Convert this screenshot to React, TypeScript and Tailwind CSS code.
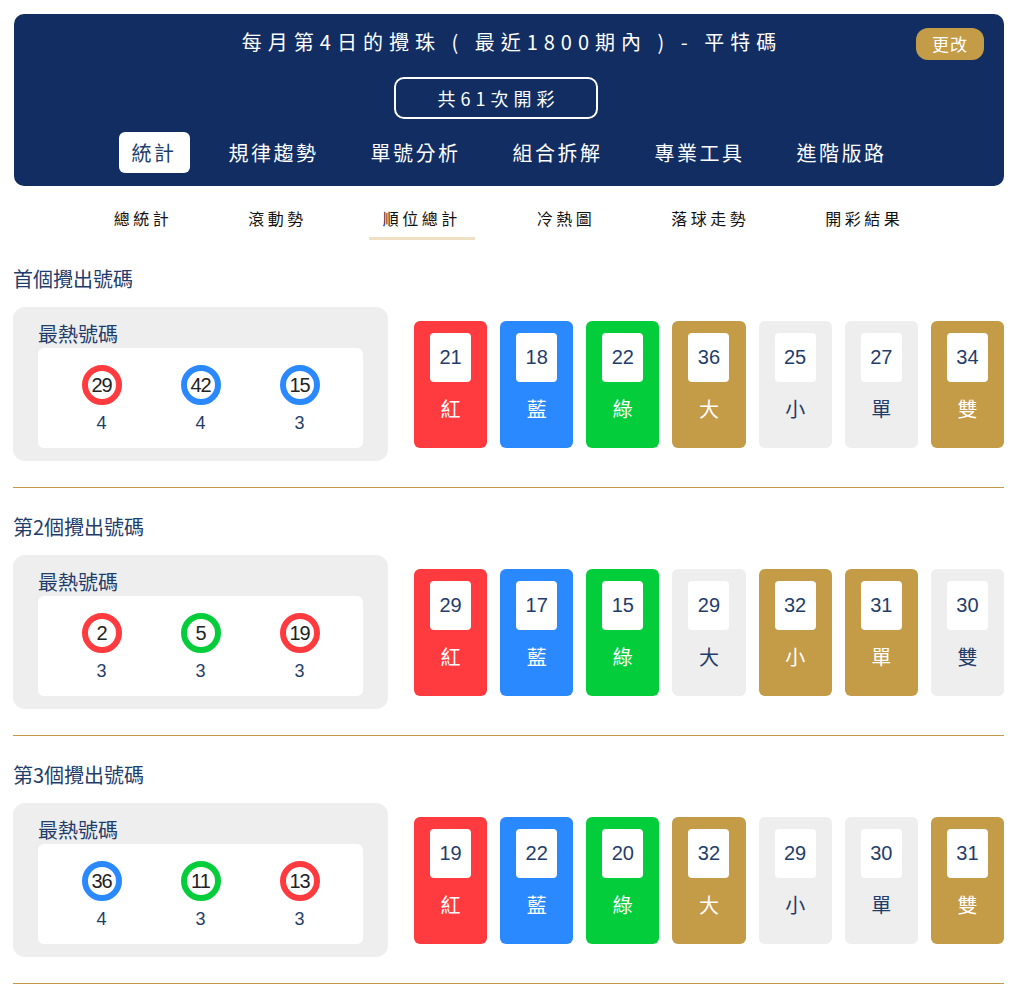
import React from 'react';

type Ball = { num: number; color: 'red' | 'blue' | 'green'; count: number };
type Card = { num: number; label: string; tone: 'red' | 'blue' | 'green' | 'gold' | 'gray' };
type Section = { title: string; balls: Ball[]; cards: Card[] };

const FONT = { fontFamily: '"Noto Sans CJK TC", "Noto Sans", sans-serif' };
const NUM_FONT = { fontFamily: '"Liberation Sans", Arial, "Noto Sans CJK TC", sans-serif' };

const BALL_BORDER: Record<Ball['color'], string> = {
  red: 'border-[#ff3b3f]',
  blue: 'border-[#2a89ff]',
  green: 'border-[#03cd3a]',
};

const CARD_BG: Record<Card['tone'], string> = {
  red: 'bg-[#ff3b3f] text-white',
  blue: 'bg-[#2a89ff] text-white',
  green: 'bg-[#03cd3a] text-white',
  gold: 'bg-[#c49b47] text-white',
  gray: 'bg-[#eeeeee] text-[#1f3d6b]',
};

const sections: Section[] = [
  {
    title: '首個攪出號碼',
    balls: [
      { num: 29, color: 'red', count: 4 },
      { num: 42, color: 'blue', count: 4 },
      { num: 15, color: 'blue', count: 3 },
    ],
    cards: [
      { num: 21, label: '紅', tone: 'red' },
      { num: 18, label: '藍', tone: 'blue' },
      { num: 22, label: '綠', tone: 'green' },
      { num: 36, label: '大', tone: 'gold' },
      { num: 25, label: '小', tone: 'gray' },
      { num: 27, label: '單', tone: 'gray' },
      { num: 34, label: '雙', tone: 'gold' },
    ],
  },
  {
    title: '第2個攪出號碼',
    balls: [
      { num: 2, color: 'red', count: 3 },
      { num: 5, color: 'green', count: 3 },
      { num: 19, color: 'red', count: 3 },
    ],
    cards: [
      { num: 29, label: '紅', tone: 'red' },
      { num: 17, label: '藍', tone: 'blue' },
      { num: 15, label: '綠', tone: 'green' },
      { num: 29, label: '大', tone: 'gray' },
      { num: 32, label: '小', tone: 'gold' },
      { num: 31, label: '單', tone: 'gold' },
      { num: 30, label: '雙', tone: 'gray' },
    ],
  },
  {
    title: '第3個攪出號碼',
    balls: [
      { num: 36, color: 'blue', count: 4 },
      { num: 11, color: 'green', count: 3 },
      { num: 13, color: 'red', count: 3 },
    ],
    cards: [
      { num: 19, label: '紅', tone: 'red' },
      { num: 22, label: '藍', tone: 'blue' },
      { num: 20, label: '綠', tone: 'green' },
      { num: 32, label: '大', tone: 'gold' },
      { num: 29, label: '小', tone: 'gray' },
      { num: 30, label: '單', tone: 'gray' },
      { num: 31, label: '雙', tone: 'gold' },
    ],
  },
];

const mainTabs = ['統計', '規律趨勢', '單號分析', '組合拆解', '專業工具', '進階版路'];
const subTabs = ['總統計', '滾動勢', '順位總計', '冷熱圖', '落球走勢', '開彩結果'];

const Header = () => (
  <div className="relative ml-px w-[990px] rounded-[10px] bg-[#112d62] pt-[14px] pb-[13px] text-white">
    <div className="pl-[6px] text-center text-[20px] leading-[28px] font-normal tracking-[6px]">
      每月第4日的攪珠 ( 最近1800期內 ) - 平特碼
    </div>
    <button
      type="button"
      className="absolute top-[14px] right-[20px] h-[32px] w-[68px] rounded-[12px] bg-[#c49b47] text-[17px] tracking-[1px] text-white"
    >
      更改
    </button>
    <div className="mt-[21px] flex justify-center pr-[26px]">
      <div className="flex h-[42px] w-[204px] items-center justify-center rounded-[10px] border-2 border-white pl-[5px] text-[18px] tracking-[5px]">
        共61次開彩
      </div>
    </div>
    <div className="mt-[13px] flex justify-center gap-[26px]">
      {mainTabs.map((t, i) => (
        <div
          key={t}
          className={
            'flex h-[41px] items-center rounded-[6px] px-[13px] text-[20px] tracking-[2.5px] ' +
            (i === 0 ? 'bg-white text-[#1f3d6b]' : 'text-white')
          }
        >
          {t}
        </div>
      ))}
    </div>
  </div>
);

const SubTabs = () => (
  <div className="flex justify-center gap-[48px] pt-[20px]">
    {subTabs.map((t, i) => (
      <div
        key={t}
        className={
          'px-[14px] pb-[7px] text-[16px] leading-[24px] tracking-[3.5px] text-[#111111] border-b-[3px] ' +
          (i === 2 ? 'border-[#efe0c4]' : 'border-transparent')
        }
      >
        {t}
      </div>
    ))}
  </div>
);

const HotBox = ({ balls }: { balls: Ball[] }) => (
  <div className="w-[375px] shrink-0 rounded-[12px] bg-[#eeeeee] px-[25px] pt-[13px] pb-[13px]">
    <div className="h-[28px] text-[20px] leading-[28px] text-[#1f3d6b]">最熱號碼</div>
    <div className="grid h-[100px] grid-cols-3 rounded-[6px] bg-white px-[14px] pt-[17px]">
      {balls.map((b, i) => (
        <div key={i} className="flex flex-col items-center">
          <div
            className={
              'flex h-10 w-10 items-center justify-center rounded-full border-[6px] bg-white text-[20px] tracking-[-1px] text-[#222222] ' +
              BALL_BORDER[b.color]
            }
            style={NUM_FONT}
          >
            {b.num}
          </div>
          <div className="mt-[7px] text-[18px] leading-[22px] text-[#1f3d6b]" style={NUM_FONT}>
            {b.count}
          </div>
        </div>
      ))}
    </div>
  </div>
);

const StatCard = ({ card }: { card: Card }) => (
  <div className={'flex h-[127px] flex-1 flex-col items-center rounded-[6px] pt-[12px] ' + CARD_BG[card.tone]}>
    <div
      className="flex h-[49px] w-[41px] items-center justify-center rounded-[4px] bg-white text-[20px] text-[#1f3d6b]"
      style={NUM_FONT}
    >
      {card.num}
    </div>
    <div className="mt-[13px] text-[20px] leading-[28px]">{card.label}</div>
  </div>
);

const PositionSection = ({ section }: { section: Section }) => (
  <div className="pt-[25px]">
    <div className="h-[28px] text-[20px] leading-[28px] text-[#1f3d6b]">{section.title}</div>
    <div className="mt-[14px] flex items-center gap-[26px]">
      <HotBox balls={section.balls} />
      <div className="flex flex-1 gap-[13px]">
        {section.cards.map((c, i) => (
          <StatCard key={i} card={c} />
        ))}
      </div>
    </div>
    <div className="mt-[26px] h-px bg-[#c69a45]" />
  </div>
);

export default function App() {
  return (
    <div className="min-h-[998px] bg-white pt-[14px] pr-[19px] pl-[13px]" style={FONT}>
      <Header />
      <SubTabs />
      {sections.map((s, i) => (
        <PositionSection key={i} section={s} />
      ))}
    </div>
  );
}
